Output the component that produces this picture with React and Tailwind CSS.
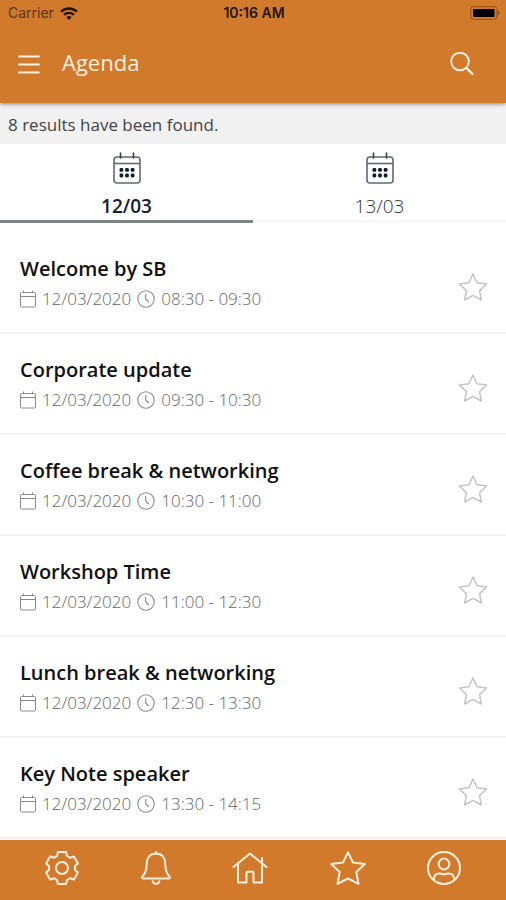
import React, { useState } from "react";

const days = ["12/03", "13/03"];

const sessions = [
  { title: "Welcome by SB", date: "12/03/2020", time: "08:30 - 09:30" },
  { title: "Corporate update", date: "12/03/2020", time: "09:30 - 10:30" },
  { title: "Coffee break & networking", date: "12/03/2020", time: "10:30 - 11:00" },
  { title: "Workshop Time", date: "12/03/2020", time: "11:00 - 12:30" },
  { title: "Lunch break & networking", date: "12/03/2020", time: "12:30 - 13:30" },
  { title: "Key Note speaker", date: "12/03/2020", time: "13:30 - 14:15" },
];

function WifiIcon() {
  return (
    <svg className="w-[18px] h-[13px]" viewBox="0 0 18 13" fill="none" stroke="currentColor" strokeWidth="2.3">
      <path d="M1 4.8a11.3 11.3 0 0 1 16 0" />
      <path d="M4 7.9a7 7 0 0 1 10 0" />
      <path d="M9 13l-2.6-2.7a3.7 3.7 0 0 1 5.2 0z" fill="currentColor" stroke="none" />
    </svg>
  );
}

function BatteryIcon() {
  return (
    <svg className="w-[30px] h-[14px]" viewBox="0 0 30 14">
      <rect x="0.7" y="0.7" width="26" height="12.6" rx="2.5" fill="none" stroke="#a05c1f" strokeWidth="1.2" />
      <rect x="3" y="3" width="21.5" height="8" rx="0.8" fill="#000" />
      <path d="M27.6 4.3c2.4 1 2.4 4.4 0 5.4z" fill="#8a4d18" />
    </svg>
  );
}

function MenuIcon() {
  return (
    <svg className="w-[22px] h-[20px]" viewBox="0 0 22 20" stroke="currentColor" strokeWidth="2" strokeLinecap="round">
      <path d="M1 2.500h20M1 10.500h20M1 18.500h20" />
    </svg>
  );
}

function SearchIcon() {
  return (
    <svg className="w-6 h-6" viewBox="0 0 24 24" fill="none" stroke="currentColor" strokeWidth="1.9" strokeLinecap="round">
      <circle cx="10" cy="9.500" r="8.800" />
      <path d="M16.200 15.900l6.200 6" strokeWidth="2.2" />
    </svg>
  );
}

function TabCalendarIcon() {
  return (
    <svg className="w-[28px] h-[32px]" viewBox="0 0 28 32" fill="none" stroke="#5d6a75" strokeWidth="1.6">
      <rect x="1" y="5" width="26" height="26" rx="3" />
      <path d="M1 11.5h26" />
      <path d="M7.5 1v5M20.5 1v5" stroke="#33424f" strokeLinecap="round" />
      <g fill="#101c2c" stroke="none">
        <rect x="6.5" y="16" width="3.8" height="3.8" rx="1.4" />
        <rect x="12.1" y="16" width="3.8" height="3.8" rx="1.4" />
        <rect x="17.7" y="16" width="3.8" height="3.8" rx="1.4" />
        <rect x="6.5" y="21.6" width="3.8" height="3.8" rx="1.4" />
        <rect x="12.1" y="21.6" width="3.8" height="3.8" rx="1.4" />
        <rect x="17.7" y="21.6" width="3.8" height="3.8" rx="1.4" />
      </g>
    </svg>
  );
}

function DateIcon() {
  return (
    <svg className="w-4 h-[18px]" viewBox="0 0 16 18" fill="none" stroke="#8a8a8a" strokeWidth="1">
      <rect x="0.5" y="2.5" width="15" height="14.5" rx="1" />
      <path d="M0.5 6.5h15M3.5 0.5v2M12.5 0.5v2" />
    </svg>
  );
}

function ClockIcon() {
  return (
    <svg className="w-[18px] h-[18px]" viewBox="0 0 18 18" fill="none" stroke="#8a8a8a" strokeWidth="1.1">
      <circle cx="9" cy="9" r="8.2" />
      <path d="M8.7 4v5l3 3" />
    </svg>
  );
}

function RowStarIcon({ filled }) {
  return (
    <svg
      className="w-[30px] h-[30px]"
      viewBox="0 0 30 30"
      fill={filled ? "#d27a2b" : "none"}
      stroke="#c4c4c4"
      strokeWidth="1.5"
      strokeLinejoin="round"
    >
      <path d="M15 2l4 8.700 9.600 1.300-7 6.600 1.700 9.400L15 23.400l-8.300 4.600 1.700-9.400-7-6.600 9.600-1.300z" />
    </svg>
  );
}

function GearIcon() {
  return (
    <svg className="w-[34px] h-[34px]" viewBox="0 0 34 34" fill="none" stroke="currentColor" strokeWidth="2" strokeLinejoin="round">
      <circle cx="17" cy="17" r="6" />
      <path d="M13 1h8l1 4 2.900 1.700 4-1.200 4 7-3 2.800v3.400l3 2.800-4 7-4-1.200L22 29l-1 4h-8l-1-4-2.900-1.700-4 1.200-4-7 3-2.800v-3.400l-3-2.800 4-7 4 1.200L12 5z" />
    </svg>
  );
}

function BellIcon() {
  return (
    <svg className="w-[30px] h-[34px]" viewBox="2 0 30 34" fill="none" stroke="currentColor" strokeWidth="2" strokeLinejoin="round" strokeLinecap="round">
      <path d="M17 1v1.500" />
      <path d="M17 2.600c-6 0-9.300 4.300-9.300 9.800 0 7.400-1.700 10.400-4.100 12.900-.9 1-.5 2.300.9 2.300h25c1.400 0 1.800-1.300.9-2.300-2.400-2.500-4.100-5.500-4.100-12.900 0-5.500-3.300-9.800-9.300-9.800z" />
      <path d="M13.800 30.300c.5 3.200 5.900 3.200 6.400 0" />
    </svg>
  );
}

function HomeIcon() {
  return (
    <svg className="w-[36px] h-[34px]" viewBox="0 0 36 34" fill="none" stroke="currentColor" strokeWidth="2" strokeLinecap="round" strokeLinejoin="round">
      <path d="M1.500 16L18 2.500 34.500 16" />
      <path d="M6 13.500V31.500h8.500V22c0-.8.400-1.200 1.200-1.200h4.600c.8 0 1.200.4 1.200 1.200v9.500H30V7" />
    </svg>
  );
}

function StarIcon() {
  return (
    <svg className="w-[36px] h-[34px]" viewBox="0 0 36 34" fill="none" stroke="currentColor" strokeWidth="2" strokeLinejoin="round">
      <path d="M18 1.200l5 10.400 11.800 1.500-8.500 8 2.200 11.700L18 27.500l-10.500 5.300 2.200-11.700-8.500-8L13 11.600z" />
    </svg>
  );
}

function ProfileIcon() {
  return (
    <svg className="w-[34px] h-[34px]" viewBox="0 0 34 34" fill="none" stroke="currentColor" strokeWidth="2">
      <circle cx="17" cy="17" r="16" />
      <circle cx="17" cy="13" r="5.400" />
      <path d="M7 29.200v-1.200c0-3.500 2.200-5.600 5.200-5.600 1.800 0 2.600.9 4.800.9s3-.9 4.800-.9c3 0 5.200 2.100 5.200 5.600v1.200" />
    </svg>
  );
}

const navItems = [
  { label: "Settings", Icon: GearIcon },
  { label: "Notifications", Icon: BellIcon },
  { label: "Home", Icon: HomeIcon },
  { label: "Favorites", Icon: StarIcon },
  { label: "Profile", Icon: ProfileIcon },
];

export default function App() {
  const [activeDay, setActiveDay] = useState("12/03");
  const [favorites, setFavorites] = useState([]);

  const toggleFavorite = (title) => {
    setFavorites((prev) =>
      prev.includes(title) ? prev.filter((t) => t !== title) : [...prev, title]
    );
  };

  return (
    <div className="min-h-screen flex flex-col bg-white font-['Open_Sans',sans-serif]">
      {/* Header */}
      <header className="relative z-10 bg-[#d27a2b] shadow-[0_1px_4px_rgba(0,0,0,0.45)]">
        <div className="grid grid-cols-3 items-center h-[26px] pl-2 pr-1.5 text-sm text-[#24140a] font-[Inter,sans-serif]">
          <div className="flex items-center gap-1.5">
            <span className="text-[#5a3414]">Carrier</span>
            <WifiIcon />
          </div>
          <span className="text-center font-semibold">10:16 AM</span>
          <div className="flex justify-end">
            <BatteryIcon />
          </div>
        </div>
        <div className="flex items-center h-[77px] pl-[18px] pr-8 pb-0.5 text-[#fdeee0]">
          <button type="button" aria-label="Open menu" className="cursor-pointer">
            <MenuIcon />
          </button>
          <h1 className="flex-1 ml-[22px] pb-1 text-[22px] leading-7">Agenda</h1>
          <button type="button" aria-label="Search" className="cursor-pointer">
            <SearchIcon />
          </button>
        </div>
      </header>

      <p className="bg-[#f1f1f1] px-2 pt-2.5 pb-[7px] text-[17px] leading-6 text-[#444]">
        8 results have been found.
      </p>

      {/* Day tabs */}
      <div className="grid grid-cols-2">
        {days.map((day) => (
          <button
            key={day}
            type="button"
            onClick={() => setActiveDay(day)}
            className={`flex flex-col items-center pt-2 text-[19px] leading-6 cursor-pointer ${
              activeDay === day
                ? "border-b-3 border-[#7c8587] font-semibold text-[#14202f]"
                : "border-b-3 border-[#f8f8f8] font-light text-[#333]"
            }`}
          >
            <TabCalendarIcon />
            <span className="mt-2.5 mb-0.5">{day}</span>
          </button>
        ))}
      </div>

      {/* Sessions */}
      <main className="flex-1 pt-2.5">
        <ul>
          {sessions.map(({ title, date, time }) => (
            <li key={title} className="flex items-center justify-between h-[101px] pl-5 pr-[18px] pt-2 border-b-2 border-[#f3f3f3]">
              <div>
                <h2 className="text-xl leading-7 font-semibold text-[#111]">{title}</h2>
                <div className="flex items-center gap-1.5 mt-1 mb-2 text-[17px] leading-6 font-light text-[#666]">
                  <DateIcon />
                  <span>{date}</span>
                  <ClockIcon />
                  <span>{time}</span>
                </div>
              </div>
              <button
                type="button"
                aria-label={`Add ${title} to favorites`}
                onClick={() => toggleFavorite(title)}
                className="cursor-pointer"
              >
                <RowStarIcon filled={favorites.includes(title)} />
              </button>
            </li>
          ))}
        </ul>
      </main>

      {/* Bottom navigation */}
      <nav className="sticky bottom-0 flex items-center justify-between h-[60px] px-[45px] pb-1 bg-[#d27a2b] text-[#fdeee0]">
        {navItems.map(({ label, Icon }) => (
          <button key={label} type="button" aria-label={label} className="cursor-pointer">
            <Icon />
          </button>
        ))}
      </nav>
    </div>
  );
}
